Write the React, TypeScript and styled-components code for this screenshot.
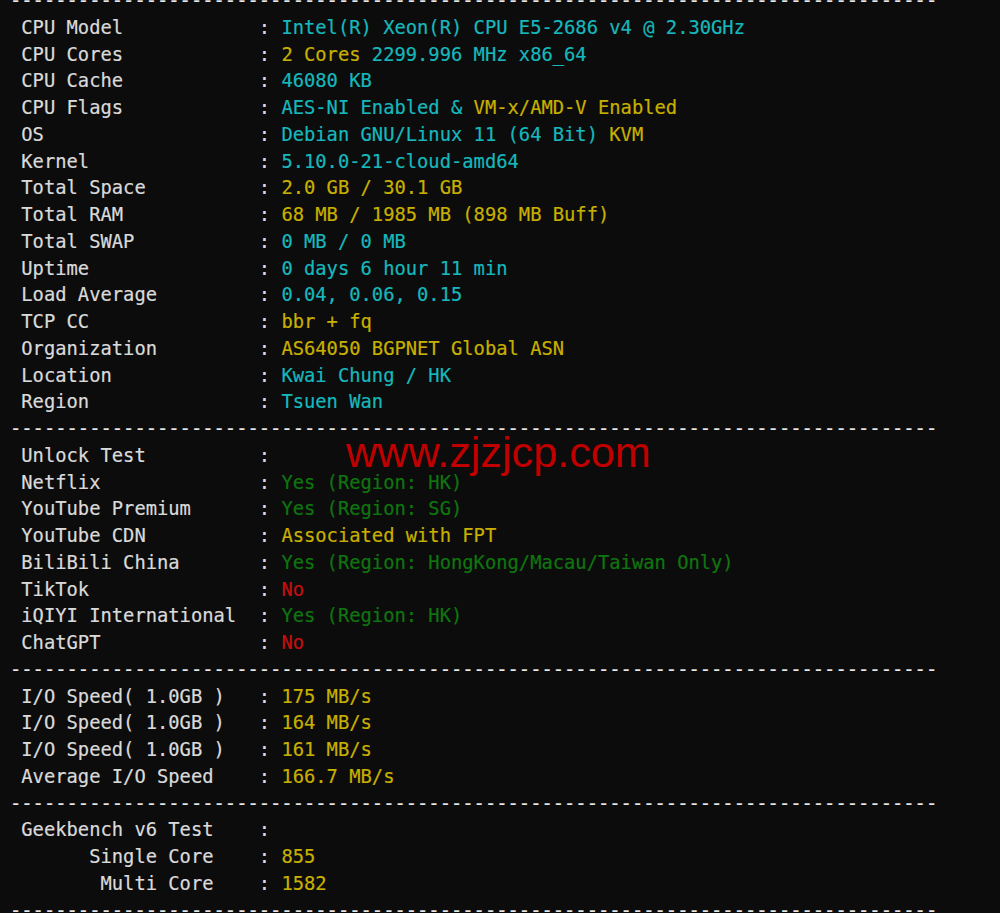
import React from "react";
import styled, { createGlobalStyle } from "styled-components";

const GlobalStyle = createGlobalStyle`
  html, body {
    margin: 0;
    padding: 0;
    background: #0c0c0c;
  }
  #root {
    background: #0c0c0c;
  }
`;

type Tone = "fg" | "cyan" | "yellow" | "green" | "red";

const palette: Record<Tone, string> = {
  fg: "#dadada",
  cyan: "#16b8bc",
  yellow: "#c8b000",
  green: "#0f760f",
  red: "#c50f0f",
};

const Screen = styled.div`
  position: relative;
  width: 1000px;
  height: 913px;
  overflow: hidden;
  background: #0c0c0c;
`;

const Terminal = styled.div`
  margin-top: -12px;
  padding-left: 10px;
  font-family: "DejaVu Sans Mono", "Liberation Mono", monospace;
  font-size: 18.8px;
  line-height: 26.75px;
  color: ${palette.fg};
  white-space: pre;
  -webkit-text-stroke: 0.2px currentColor;
`;

const Line = styled.div`
  height: 26.75px;
`;

const Rule = styled.div`
  height: 26.75px;
  color: #e8e8e8;
`;

const Seg = styled.span<{ $tone: Tone }>`
  color: ${(p) => palette[p.$tone]};
`;

const Watermark = styled.div`
  position: absolute;
  left: 346px;
  top: 431px;
  font-family: "Liberation Sans", Arial, sans-serif;
  font-size: 43.2px;
  line-height: 1;
  color: #c00000;
  white-space: nowrap;
`;

type Row = { label: string; value: [string, Tone][] };
type Block = Row[];

const blocks: Block[] = [
  [
    { label: "CPU Model", value: [["Intel(R) Xeon(R) CPU E5-2686 v4 @ 2.30GHz", "cyan"]] },
    { label: "CPU Cores", value: [["2 Cores", "yellow"], [" 2299.996 MHz x86_64", "cyan"]] },
    { label: "CPU Cache", value: [["46080 KB", "cyan"]] },
    { label: "CPU Flags", value: [["AES-NI Enabled & ", "cyan"], ["VM-x/AMD-V Enabled", "yellow"]] },
    { label: "OS", value: [["Debian GNU/Linux 11 (64 Bit)", "cyan"], [" KVM", "yellow"]] },
    { label: "Kernel", value: [["5.10.0-21-cloud-amd64", "cyan"]] },
    { label: "Total Space", value: [["2.0 GB / 30.1 GB", "yellow"]] },
    { label: "Total RAM", value: [["68 MB / 1985 MB (898 MB Buff)", "yellow"]] },
    { label: "Total SWAP", value: [["0 MB / 0 MB", "cyan"]] },
    { label: "Uptime", value: [["0 days 6 hour 11 min", "cyan"]] },
    { label: "Load Average", value: [["0.04, 0.06, 0.15", "cyan"]] },
    { label: "TCP CC", value: [["bbr + fq", "yellow"]] },
    { label: "Organization", value: [["AS64050 BGPNET Global ASN", "yellow"]] },
    { label: "Location", value: [["Kwai Chung / HK", "cyan"]] },
    { label: "Region", value: [["Tsuen Wan", "cyan"]] },
  ],
  [
    { label: "Unlock Test", value: [] },
    { label: "Netflix", value: [["Yes (Region: HK)", "green"]] },
    { label: "YouTube Premium", value: [["Yes (Region: SG)", "green"]] },
    { label: "YouTube CDN", value: [["Associated with FPT", "yellow"]] },
    { label: "BiliBili China", value: [["Yes (Region: HongKong/Macau/Taiwan Only)", "green"]] },
    { label: "TikTok", value: [["No", "red"]] },
    { label: "iQIYI International", value: [["Yes (Region: HK)", "green"]] },
    { label: "ChatGPT", value: [["No", "red"]] },
  ],
  [
    { label: "I/O Speed( 1.0GB )", value: [["175 MB/s", "yellow"]] },
    { label: "I/O Speed( 1.0GB )", value: [["164 MB/s", "yellow"]] },
    { label: "I/O Speed( 1.0GB )", value: [["161 MB/s", "yellow"]] },
    { label: "Average I/O Speed", value: [["166.7 MB/s", "yellow"]] },
  ],
  [
    { label: "Geekbench v6 Test", value: [] },
    { label: "      Single Core", value: [["855", "yellow"]] },
    { label: "       Multi Core", value: [["1582", "yellow"]] },
  ],
];

const RULE = "-".repeat(82);
const LABEL_WIDTH = 21;

const TermRow: React.FC<{ row: Row }> = ({ row }) => (
  <Line>
    {" " + row.label.padEnd(LABEL_WIDTH, " ") + ": "}
    {row.value.map(([text, tone], i) => (
      <Seg key={i} $tone={tone}>
        {text}
      </Seg>
    ))}
  </Line>
);

export default function App() {
  return (
    <>
      <GlobalStyle />
      <Screen>
        <Terminal>
          <Rule>{RULE}</Rule>
          {blocks.map((block, bi) => (
            <React.Fragment key={bi}>
              {block.map((row, ri) => (
                <TermRow key={ri} row={row} />
              ))}
              <Rule>{RULE}</Rule>
            </React.Fragment>
          ))}
        </Terminal>
        <Watermark>www.zjzjcp.com</Watermark>
      </Screen>
    </>
  );
}
